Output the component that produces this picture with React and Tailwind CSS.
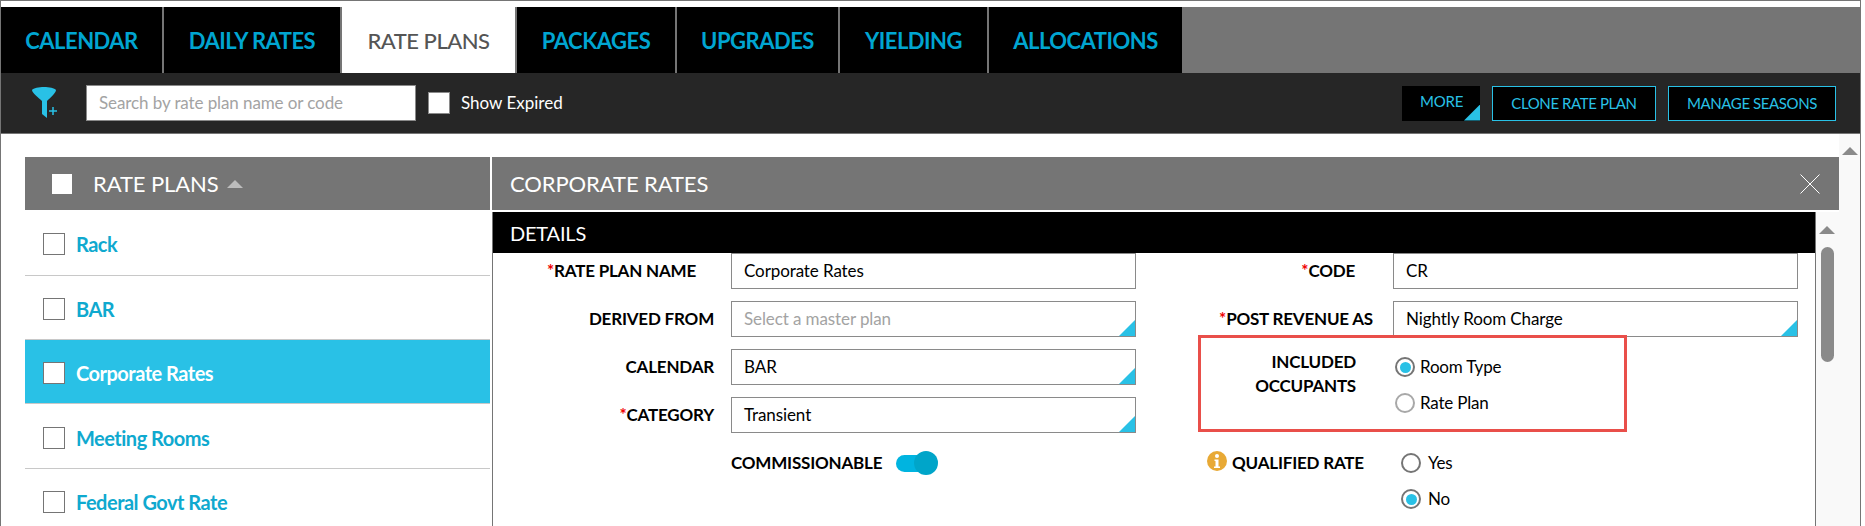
import React from 'react';

const tabs = [
  { label: 'CALENDAR', w: 'w-[163px]' },
  { label: 'DAILY RATES', w: 'w-[178px]' },
  { label: 'RATE PLANS', w: 'w-[175px]', active: true },
  { label: 'PACKAGES', w: 'w-[160px]' },
  { label: 'UPGRADES', w: 'w-[163px]' },
  { label: 'YIELDING', w: 'w-[149px]' },
  { label: 'ALLOCATIONS', w: 'w-[193px]', last: true },
];

const plans = [
  { name: 'Rack', h: 'h-[66px]' },
  { name: 'BAR', h: 'h-[64px]' },
  { name: 'Corporate Rates', h: 'h-[64px]', selected: true },
  { name: 'Meeting Rooms', h: 'h-[65px]' },
  { name: 'Federal Govt Rate', h: 'h-[64px]' },
];

function Corner({ className = 'w-4 h-4' }) {
  return <span className={`absolute right-0 bottom-0 bg-[#29c1e6] [clip-path:polygon(100%_0,100%_100%,0_100%)] ${className}`} />;
}

function Required() {
  return <span className="text-[#f00000]">*</span>;
}

function Field({ value, placeholder, select }) {
  return (
    <div className="relative w-[405px] h-[36px] border border-[#8a8a8a] flex items-center pl-[12px] text-[17px] font-normal tracking-[-0.1px] text-black bg-white">
      <span className={placeholder ? 'text-[#a3a3a3]' : ''}>{value || placeholder}</span>
      {select && <Corner />}
    </div>
  );
}

function Radio({ checked, light }) {
  const ring = light ? 'border-[#a8a8a8]' : 'border-[#757575]';
  return (
    <span className={`w-[20px] h-[20px] rounded-full border-2 ${ring} bg-white flex items-center justify-center shrink-0`}>
      {checked && <span className="w-[11px] h-[11px] rounded-full bg-[#29c1e6]" />}
    </span>
  );
}

function Triangle({ className }) {
  return <span className={`w-0 h-0 border-x-[8px] border-x-transparent border-b-[8px] ${className}`} />;
}

export default function App() {
  return (
    <div className="w-[1865px] h-[526px] overflow-hidden bg-white font-['Lato',sans-serif]">
      <div className="relative w-[1861px] h-[526px] border-l border-r border-t border-[#757575] flex flex-col">
        {/* Tabs */}
        <div className="mt-[6px] h-[66px] bg-[#757575] flex shrink-0">
          {tabs.map(t => (
            <div
              key={t.label}
              className={`${t.w} h-full flex items-center justify-center text-[22px] tracking-[-0.5px] ${t.last ? '' : 'border-r-2 border-[#757575]'} ${t.active ? 'bg-white text-[#555555] font-medium' : 'bg-black text-[#00a5d1] font-bold'}`}
            >
              {t.label}
            </div>
          ))}
        </div>

        {/* Toolbar */}
        <div className="h-[61px] bg-[#262626] border-b border-[#757575] flex items-center shrink-0">
          <svg className="ml-[30px] w-[28px] h-[32px]" viewBox="0 0 28 32">
            <path d="M1 3 C4 -1 22 -1 25 3 C25 6 19 11 16 14 L16 31 L11 27 L11 14 C8 11 1 6 1 3 Z" fill="#29c1e6" />
            <path d="M18 24 h8 M22 20 v8" stroke="#29c1e6" strokeWidth="1.5" />
          </svg>
          <div className="ml-[27px] w-[330px] h-[36px] bg-white border border-[#8a8a8a] flex items-center pl-[12px] text-[17px] tracking-[-0.1px] text-[#a3a3a3]">
            Search by rate plan name or code
          </div>
          <span className="ml-[12px] w-[22px] h-[22px] bg-white border border-[#8a8a8a]" />
          <span className="ml-[11px] text-[17px] text-white">Show Expired</span>
          <div className="ml-auto mr-[24px] flex items-center gap-[12px]">
            <div className="relative w-[78px] h-[35px] bg-black text-[#29c1e6] text-[15px] tracking-[-0.2px] flex items-center pl-[18px] pb-[3px]">
              MORE
              <Corner />
            </div>
            <div className="w-[164px] h-[35px] bg-black border border-[#29c1e6] text-[#29c1e6] text-[15px] tracking-[-0.4px] flex items-center justify-center">
              CLONE RATE PLAN
            </div>
            <div className="w-[168px] h-[35px] bg-black border border-[#29c1e6] text-[#29c1e6] text-[15px] tracking-[-0.4px] flex items-center justify-center">
              MANAGE SEASONS
            </div>
          </div>
        </div>

        {/* Body */}
        <div className="flex flex-1 min-h-0">
          <div className="flex flex-1 pl-[24px] pt-[23px] min-h-0">
            {/* Rate plan list */}
            <div className="w-[465px] shrink-0 flex flex-col">
              <div className="h-[53px] bg-[#757575] flex items-center pl-[27px] text-white text-[22px] tracking-[-0.1px] shrink-0">
                <span className="w-[20px] h-[20px] bg-white" />
                <span className="ml-[21px]">RATE PLANS</span>
                <Triangle className="ml-[8px] border-b-[#bdbdbd]" />
              </div>
              {plans.map(p => (
                <div
                  key={p.name}
                  className={`${p.h} shrink-0 flex items-center pl-[18px] pt-[3px] border-b border-[#c8c8c8] ${p.selected ? 'bg-[#29c1e6] text-white' : 'text-[#0fa9cf]'}`}
                >
                  <span className="w-[22px] h-[22px] bg-white border border-[#757575] shrink-0" />
                  <span className="ml-[11px] text-[20px] font-bold tracking-[-0.5px]">{p.name}</span>
                </div>
              ))}
            </div>

            {/* Detail panel */}
            <div className="ml-[2px] flex-1 flex flex-col min-h-0">
              <div className="h-[53px] bg-[#757575] flex items-center justify-between pl-[18px] pr-[19px] text-white text-[22px] tracking-[-0.1px] shrink-0">
                <span>CORPORATE RATES</span>
                <svg className="w-[20px] h-[20px]" viewBox="0 0 20 20">
                  <path d="M0.5 0.5 L19.5 19.5 M19.5 0.5 L0.5 19.5" stroke="#ffffff" strokeWidth="1" />
                </svg>
              </div>
              <div className="mt-[2px] flex flex-1 min-h-0 border-l border-[#757575]">
                <div className="relative w-[1323px] border-r border-[#757575]">
                  <div className="h-[41px] bg-black text-white text-[20px] tracking-[-0.2px] flex items-center pl-[17px]">DETAILS</div>
                  <div className="flex text-[17px] font-bold tracking-[-0.2px] text-black">
                    {/* left column */}
                    <div className="w-[644px] pl-[238px] flex flex-col gap-[12px]">
                      <div className="relative">
                        <span className="absolute right-[441px] top-[5px] whitespace-nowrap"><Required />RATE PLAN NAME</span>
                        <Field value="Corporate Rates" />
                      </div>
                      <div className="relative">
                        <span className="absolute right-[423px] top-[5px] whitespace-nowrap">DERIVED FROM</span>
                        <Field placeholder="Select a master plan" select />
                      </div>
                      <div className="relative">
                        <span className="absolute right-[423px] top-[5px] whitespace-nowrap">CALENDAR</span>
                        <Field value="BAR" select />
                      </div>
                      <div className="relative">
                        <span className="absolute right-[423px] top-[5px] whitespace-nowrap"><Required />CATEGORY</span>
                        <Field value="Transient" select />
                      </div>
                      <div className="mt-[6px] h-[24px] flex items-center">
                        <span className="whitespace-nowrap">COMMISSIONABLE</span>
                        <span className="relative ml-[14px] w-[42px] h-[24px] flex items-center">
                          <span className="w-[30px] h-[17px] rounded-full bg-[#00b4e0]" />
                          <span className="absolute right-0 top-0 w-[24px] h-[24px] rounded-full bg-[#00a5c9]" />
                        </span>
                      </div>
                    </div>
                    {/* right column */}
                    <div className="flex-1 flex flex-col">
                      <div className="relative flex pl-[256px]">
                        <span className="absolute right-[460px] top-[5px] whitespace-nowrap"><Required />CODE</span>
                        <Field value="CR" />
                      </div>
                      <div className="relative flex pl-[256px] mt-[12px]">
                        <span className="absolute right-[442px] top-[5px] whitespace-nowrap"><Required />POST REVENUE AS</span>
                        <Field value="Nightly Room Charge" select />
                      </div>
                      <div className="mt-[12px] h-[72px] flex">
                        <div className="w-[220px] pr-[1px] text-right leading-[24px] pt-[1px] pl-[60px]">INCLUDED OCCUPANTS</div>
                        <div className="ml-[38px] flex flex-col font-normal gap-[16px] pt-[8px]">
                          <label className="flex items-center gap-[5px] h-[20px]"><Radio checked />Room Type</label>
                          <label className="flex items-center gap-[5px] h-[20px]"><Radio light />Rate Plan</label>
                        </div>
                      </div>
                      <div className="mt-[30px] flex">
                        <div className="w-[225px] pl-[70px] flex items-center h-[24px] whitespace-nowrap">
                          <svg className="w-[20px] h-[20px] shrink-0 -mt-[4px]" viewBox="0 0 20 20">
                            <circle cx="10" cy="10" r="10" fill="#e8a935" />
                            <circle cx="10" cy="5" r="2" fill="#ffffff" />
                            <path d="M7.5 8.5 h4 v7 h1.5 v1.5 h-6 v-1.5 h1.5 v-5.5 h-1 z" fill="#ffffff" />
                          </svg>
                          <span className="ml-[5px]">QUALIFIED RATE</span>
                        </div>
                        <div className="ml-[39px] flex flex-col font-normal gap-[16px] pt-[2px]">
                          <label className="flex items-center gap-[7px] h-[20px]"><Radio />Yes</label>
                          <label className="flex items-center gap-[7px] h-[20px]"><Radio checked />No</label>
                        </div>
                      </div>
                    </div>
                  </div>
                  {/* annotation box */}
                  <div className="absolute left-[705px] top-[123px] w-[429px] h-[97px] border-[3px] border-[#e94f4a]" />
                </div>
                {/* inner scrollbar */}
                <div className="flex-1 bg-[#f9f9f9] flex flex-col items-center pt-[14px] pl-[3px] pr-[4px]">
                  <Triangle className="border-b-[#8a8a8a]" />
                  <span className="mt-[13px] w-[13px] h-[115px] rounded-t-full rounded-b-full bg-[#8a8a8a]" />
                </div>
              </div>
            </div>
          </div>
          {/* outer scrollbar */}
          <div className="w-[21px] bg-[#f9f9f9] flex flex-col items-center pt-[13px]">
            <Triangle className="border-b-[#8a8a8a]" />
          </div>
        </div>
      </div>
    </div>
  );
}
